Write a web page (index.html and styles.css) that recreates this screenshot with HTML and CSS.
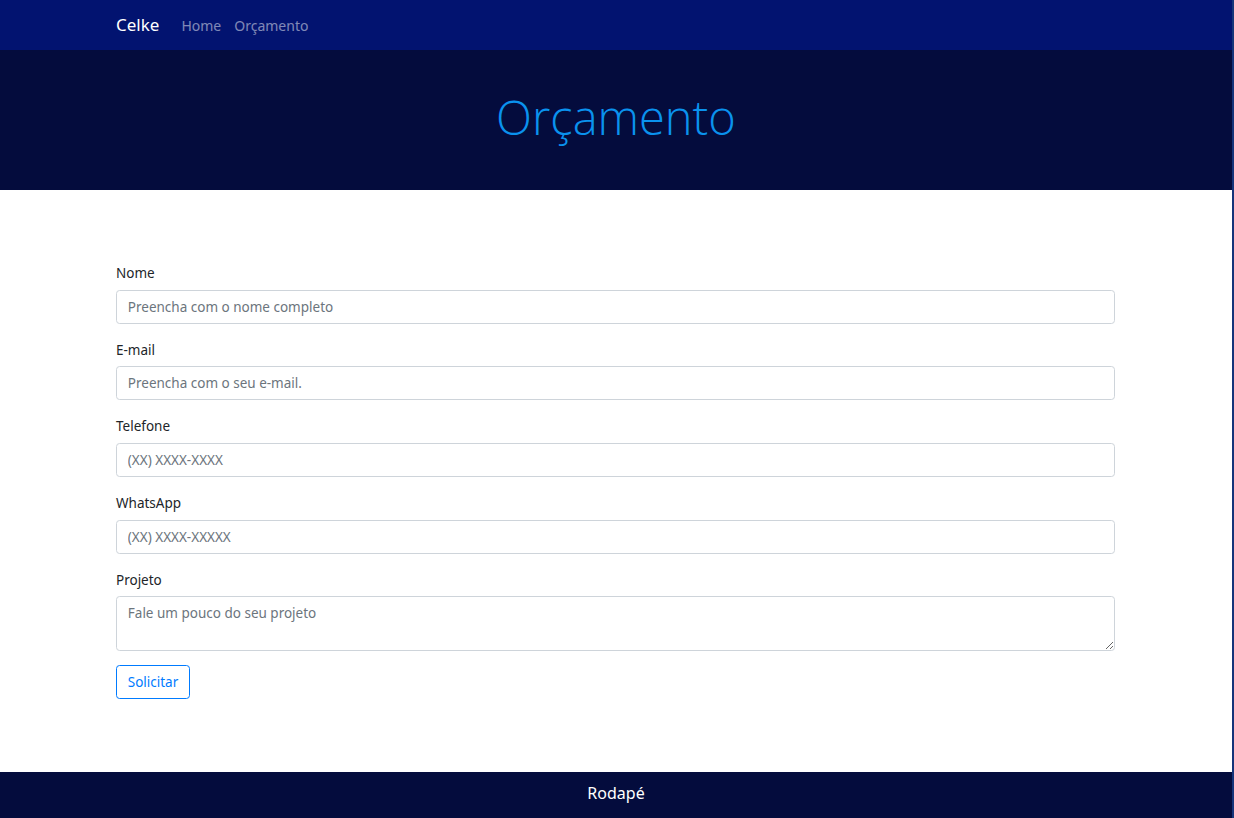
FILE: index.html
```html
<!DOCTYPE html>
<html lang="pt-br">
<head>
<meta charset="utf-8">
<title>Orçamento</title>
<link rel="stylesheet" href="styles.css">
</head>
<body>
<div class="page">
  <nav class="navbar">
    <div class="container nav-inner">
      <a class="brand" href="#">Celke</a>
      <a class="nav-link" href="#">Home</a>
      <a class="nav-link" href="#">Orçamento</a>
    </div>
  </nav>
  <header class="hero">
    <h1 class="hero-title">Orçamento</h1>
  </header>
  <main class="container main">
    <form class="form">
      <div class="form-group">
        <label class="label">Nome</label>
        <input class="input" type="text" placeholder="Preencha com o nome completo">
      </div>
      <div class="form-group">
        <label class="label">E-mail</label>
        <input class="input" type="text" placeholder="Preencha com o seu e-mail.">
      </div>
      <div class="form-group">
        <label class="label">Telefone</label>
        <input class="input" type="text" placeholder="(XX) XXXX-XXXX">
      </div>
      <div class="form-group">
        <label class="label">WhatsApp</label>
        <input class="input" type="text" placeholder="(XX) XXXX-XXXXX">
      </div>
      <div class="form-group last">
        <label class="label">Projeto</label>
        <textarea class="input textarea" placeholder="Fale um pouco do seu projeto"></textarea>
      </div>
      <button class="btn" type="button">Solicitar</button>
    </form>
  </main>
  <footer class="footer">Rodapé</footer>
</div>
</body>
</html>
```

FILE: styles.css
```css
* { box-sizing: border-box; }
html, body { margin: 0; padding: 0; }
body {
  font-family: "Noto Sans", "Open Sans", sans-serif;
  font-size: 14.4px;
  line-height: 1.5;
  color: #212529;
  background: #15357a;
}
.page {
  width: 1232px;
  background: #fff;
  min-height: 818px;
  display: flex;
  flex-direction: column;
}
.container {
  width: 999px;
  margin: 0 auto 0 116px;
}
.navbar {
  background: #021370;
  height: 50px;
  display: flex;
  align-items: center;
}
.nav-inner {
  display: flex;
  align-items: center;
}
.brand {
  color: #fff;
  text-decoration: none;
  font-size: 17px;
  margin-right: 22px;
}
.nav-link {
  color: rgba(255,255,255,.5);
  text-decoration: none;
  font-size: 14px;
  margin-right: 13px;
}
.hero {
  background: #040c3d;
  height: 140px;
  display: flex;
  align-items: center;
  justify-content: center;
}
.hero-title {
  margin: 0 0 5px;
  font-family: "Open Sans", "Noto Sans", sans-serif;
  font-weight: 300;
  font-size: 47px;
  color: #0a92ee;
  line-height: 1.2;
}
.main {
  padding-top: 73px;
  padding-bottom: 72px;
  flex: 1;
}
.form-group {
  margin-bottom: 16.1px;
}
.form-group.last {
  margin-bottom: 14px;
}
.label {
  display: block;
  margin-bottom: 5px;
  font-size: 13.5px;
  line-height: 21.6px;
}
.input {
  display: block;
  width: 100%;
  height: 34px;
  padding: 5.4px 10.8px;
  font-family: inherit;
  font-size: 13.5px;
  line-height: 1.5;
  color: #495057;
  background: #fff;
  border: 1px solid #ced4da;
  border-radius: 3.6px;
  outline: none;
}
.input::placeholder { color: #6c757d; opacity: 1; }
.textarea {
  height: 55px;
  resize: vertical;
}
.btn {
  display: block;
  height: 34px;
  width: 74px;
  padding: 0;
  font-family: inherit;
  font-size: 13.5px;
  color: #007bff;
  background: #fff;
  border: 1px solid #007bff;
  border-radius: 3.6px;
}
.footer {
  background: #040c3d;
  height: 46px;
  padding-bottom: 5px;
  color: #fff;
  font-size: 16px;
  display: flex;
  align-items: center;
  justify-content: center;
}
```
